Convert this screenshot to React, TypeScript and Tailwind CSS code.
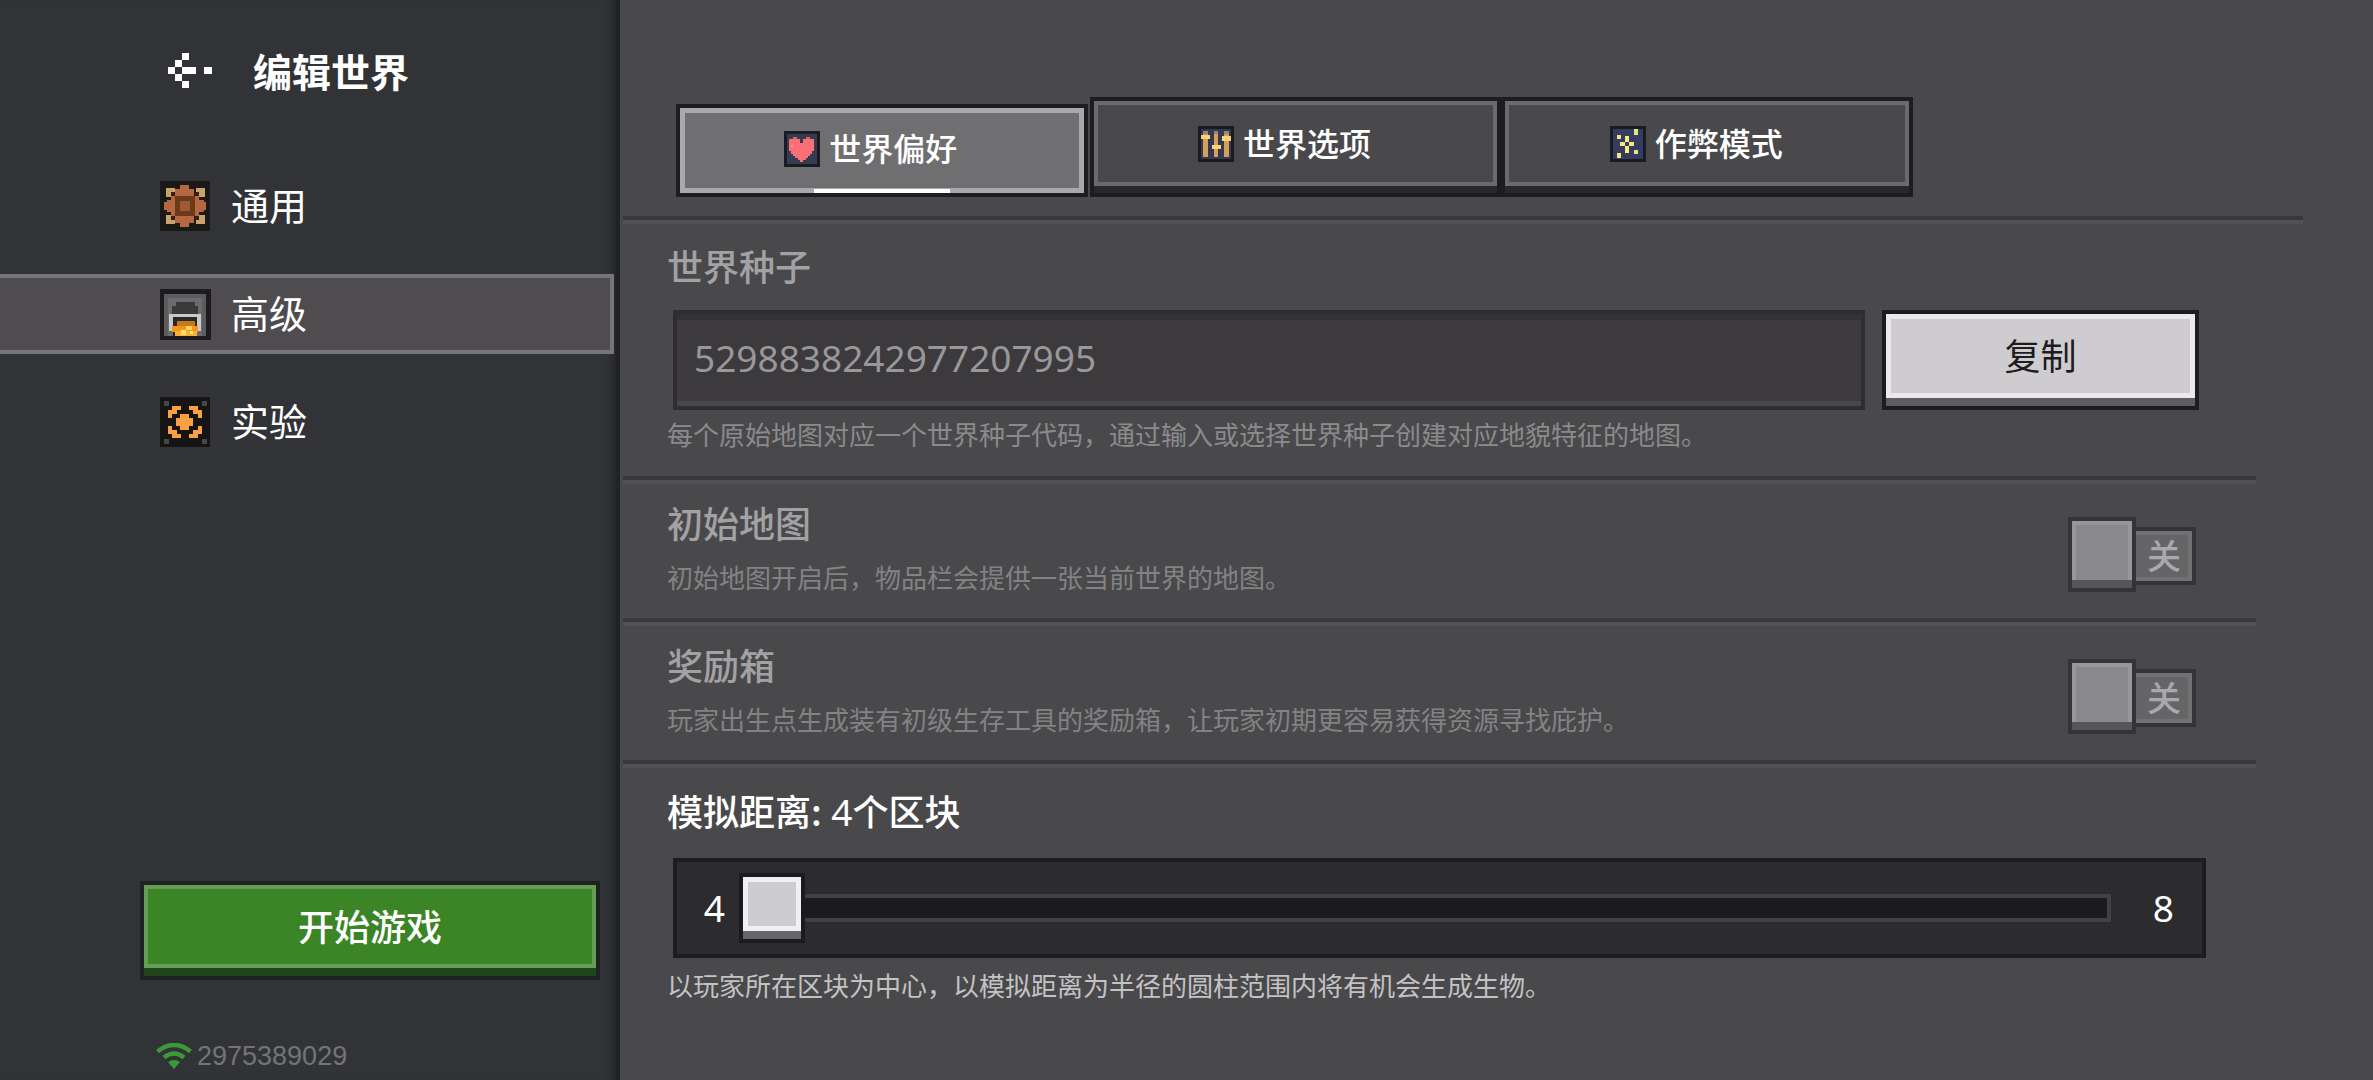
import React from 'react';

type PixelRect = [x: number, y: number, w: number, h: number, color: string];

const ARROW: PixelRect[] = [
  [0, 14, 7, 7, '#fff'],
  [7, 7, 7, 7, '#fff'],
  [7, 21, 7, 7, '#fff'],
  [14, 0, 7, 7, '#fff'],
  [14, 28, 7, 7, '#fff'],
  [14, 14, 14, 7, '#fff'],
  [36, 14, 8, 7, '#fff'],
];

const COPPER_BULB: PixelRect[] = [
  [0, 0, 50, 50, '#1b1917'],
  [6, 7, 9, 9, '#c9a26c'],
  [36, 7, 9, 9, '#c9a26c'],
  [6, 34, 9, 9, '#c9a26c'],
  [36, 34, 9, 9, '#c9a26c'],
  [20, 4, 9, 42, '#b5673f'],
  [15, 8, 19, 34, '#b5673f'],
  [11, 15, 28, 20, '#b5673f'],
  [7, 19, 37, 12, '#b5673f'],
  [4, 21, 42, 8, '#b5673f'],
  [11, 11, 4, 4, '#3a1f10'],
  [35, 11, 4, 4, '#3a1f10'],
  [11, 35, 4, 4, '#3a1f10'],
  [35, 35, 4, 4, '#3a1f10'],
  [15, 15, 20, 20, '#6b3a18'],
  [20, 20, 10, 10, '#9c5c33'],
];

const FURNACE: PixelRect[] = [
  [0, 0, 51, 51, '#1d1b1d'],
  [4, 5, 42, 42, '#5c5c5e'],
  [8, 9, 34, 38, '#6b6b6d'],
  [16, 13, 19, 5, '#3a3a3c'],
  [12, 17, 26, 8, '#3a3a3c'],
  [9, 25, 32, 3, '#c9c9ca'],
  [9, 25, 4, 17, '#c9c9ca'],
  [37, 25, 4, 17, '#c9c9ca'],
  [13, 28, 24, 19, '#2b2725'],
  [17, 32, 18, 5, '#c47a16'],
  [12, 37, 26, 6, '#f3971c'],
  [15, 42, 22, 5, '#fdb12a'],
  [21, 41, 5, 5, '#ffe07a'],
  [26, 37, 6, 4, '#ffd35c'],
  [30, 42, 3, 3, '#ffe89a'],
];

const EXPERIMENT: PixelRect[] = [
  [0, 0, 50, 50, '#171513'],
  [4, 4, 5, 5, '#464648'],
  [42, 4, 5, 5, '#464648'],
  [4, 42, 5, 5, '#464648'],
  [42, 42, 5, 5, '#464648'],
  [20, 17, 9, 16, '#f9a043'],
  [16, 21, 17, 8, '#f9a043'],
  [12, 9, 9, 4, '#f9a043'],
  [8, 13, 9, 4, '#f9a043'],
  [8, 17, 4, 4, '#f9a043'],
  [29, 9, 9, 4, '#f9a043'],
  [33, 13, 9, 4, '#f9a043'],
  [38, 17, 4, 4, '#f9a043'],
  [8, 29, 4, 4, '#f9a043'],
  [8, 33, 9, 4, '#f9a043'],
  [12, 37, 9, 4, '#f9a043'],
  [38, 29, 4, 4, '#f9a043'],
  [33, 33, 9, 4, '#f9a043'],
  [29, 37, 9, 4, '#f9a043'],
];

const HEART: PixelRect[] = [
  [0, 0, 36, 36, '#1a1c24'],
  [3, 3, 30, 30, '#363c50'],
  [9, 6, 4, 3, '#d9636c'],
  [22, 6, 4, 3, '#d9636c'],
  [5, 8, 11, 4, '#fb7078'],
  [19, 8, 11, 4, '#fb7078'],
  [5, 12, 25, 8, '#fb7078'],
  [7, 20, 21, 3, '#fb7078'],
  [9, 23, 17, 2, '#fb7078'],
  [11, 25, 13, 2, '#fb7078'],
  [14, 27, 8, 2, '#fb7078'],
  [16, 29, 3, 2, '#fb7078'],
  [7, 14, 2, 2, '#ff9090'],
];

const SLIDERS: PixelRect[] = [
  [0, 0, 36, 36, '#1a1c24'],
  [3, 3, 30, 30, '#363850'],
  [5, 5, 5, 26, '#d3a05a'],
  [16, 5, 4, 26, '#d3a05a'],
  [26, 5, 5, 26, '#d3a05a'],
  [5, 5, 5, 3, '#95866f'],
  [16, 5, 4, 3, '#95866f'],
  [26, 5, 5, 3, '#95866f'],
  [3, 9, 9, 4, '#fbd374'],
  [14, 19, 9, 4, '#fbd374'],
  [24, 10, 9, 5, '#fbd374'],
];

const SPARKS: PixelRect[] = [
  [0, 0, 36, 36, '#1a1c24'],
  [3, 3, 30, 30, '#363c60'],
  [24, 3, 4, 6, '#dbe887'],
  [7, 9, 4, 4, '#f1e77a'],
  [15, 10, 4, 6, '#f5ec7c'],
  [10, 16, 5, 4, '#f5e878'],
  [19, 16, 5, 4, '#f5e878'],
  [15, 20, 4, 7, '#f5ec7c'],
  [24, 24, 4, 4, '#dbe887'],
  [7, 27, 4, 5, '#f1e77a'],
];

const NAV_ITEMS = [
  { id: 'general', label: '通用', icon: COPPER_BULB },
  { id: 'advanced', label: '高级', icon: FURNACE },
  { id: 'experiment', label: '实验', icon: EXPERIMENT },
];

const TABS = [
  { id: 'preference', label: '世界偏好', icon: HEART },
  { id: 'options', label: '世界选项', icon: SLIDERS },
  { id: 'cheats', label: '作弊模式', icon: SPARKS },
];

function PixelIcon({ rects, width, height }: { rects: PixelRect[]; width: number; height: number }) {
  return (
    <svg
      width={width}
      height={height}
      viewBox={`0 0 ${width} ${height}`}
      shapeRendering="crispEdges"
      className="shrink-0"
      aria-hidden="true"
    >
      {rects.map(([x, y, w, h, color], i) => (
        <rect key={i} x={x} y={y} width={w} height={h} fill={color} />
      ))}
    </svg>
  );
}

function WifiIcon() {
  return (
    <svg width="36" height="26" viewBox="0 0 36 26" fill="none" stroke="#3a9a37" className="shrink-0" aria-hidden="true">
      <path d="M1.5 8.5 Q18 -4.5 34.5 8.5" strokeWidth="4.5" />
      <path d="M8 14.5 Q18 6.5 28 14.5" strokeWidth="4.5" />
      <path d="M12 19 Q18 15 24 19 L18 26 Z" fill="#3a9a37" stroke="none" />
    </svg>
  );
}

function Divider({ className = '' }: { className?: string }) {
  return <div className={`ml-[3px] h-2 border-t-4 border-[#39393b] bg-[#525254] ${className}`} />;
}

function ToggleRow({ id, title, description }: { id: string; title: string; description: string }) {
  return (
    <div className="flex items-start justify-between pt-[14px] pr-[60px] pb-[25px] pl-[47px]">
      <div>
        <h2 id={`${id}-title`} className="text-[36px] leading-[48px] font-medium text-[#a2a1a3]">{title}</h2>
        <p className="mt-[15px] text-[26px] leading-8 text-[#838284]">{description}</p>
      </div>
      <label className="mt-[19px] flex shrink-0 items-start">
        <input
          type="checkbox"
          disabled
          aria-labelledby={`${id}-title`}
          className="h-[75px] w-[68px] appearance-none border-4 border-[#343436] bg-[#89898b] shadow-[inset_0_-8px_0_#565658,inset_0_0_0_4px_#979799]"
        />
        <span className="mt-[10px] flex h-[58px] w-[60px] items-center justify-center border-y-4 border-r-4 border-[#343436] bg-[#656567] pb-[2px] text-[34px] leading-none font-medium text-[#a9a9ab] shadow-[inset_0_4px_0_#717173,inset_-4px_-4px_0_#717173]">
          关
        </span>
      </label>
    </div>
  );
}

export default function App() {
  const [activeNav, setActiveNav] = React.useState('advanced');
  const [activeTab, setActiveTab] = React.useState('preference');
  const [distance, setDistance] = React.useState(4);

  return (
    <div className="flex min-h-screen bg-[#49494b] font-['Noto_Sans_CJK_SC',sans-serif]">
      <aside className="flex w-[620px] shrink-0 flex-col border-r-4 border-[#202224] bg-[#313336] pt-[46px] pb-2 shadow-[inset_-10px_0_8px_-8px_#1f2123]">
        <div className="flex items-center gap-[41px] pl-[168px]">
          <button type="button" aria-label="返回">
            <PixelIcon rects={ARROW} width={44} height={35} />
          </button>
          <h1 className="text-[39px] leading-[48px] font-bold text-white">编辑世界</h1>
        </div>

        <nav className="mt-[72px] mr-[2px] flex flex-col gap-7">
          {NAV_ITEMS.map((item) => (
            <button
              key={item.id}
              type="button"
              onClick={() => setActiveNav(item.id)}
              className={`flex h-20 items-center gap-5 border-y-4 border-r-4 pl-40 text-[38px] leading-[48px] text-white ${
                activeNav === item.id ? 'border-[#767577] bg-[#4e4c4f]' : 'border-transparent'
              }`}
            >
              <PixelIcon rects={item.icon} width={51} height={51} />
              <span className="pb-1">{item.label}</span>
            </button>
          ))}
        </nav>

        <button
          type="button"
          className="mt-auto mr-4 ml-[140px] h-[99px] border-4 border-[#1f2221] bg-[#3b8527] pb-3 text-[36px] leading-[48px] font-medium text-white shadow-[inset_0_-8px_0_#21451a,inset_0_-12px_0_#659d56,inset_0_0_0_4px_#659d56]"
        >
          开始游戏
        </button>
        <div className="mt-[60px] flex items-center gap-[5px] pl-[156px] font-['Liberation_Sans',sans-serif] text-[27px] leading-8 text-[#737476]">
          <WifiIcon />
          2975389029
        </div>
      </aside>

      <main className="min-w-0 flex-1 pt-[97px]">
        <div role="tablist" className="ml-14 flex max-w-[1237px] items-end">
          {TABS.map((tab) => (
            <button
              key={tab.id}
              type="button"
              role="tab"
              aria-selected={activeTab === tab.id}
              onClick={() => setActiveTab(tab.id)}
              className={`relative flex flex-1 items-center justify-center gap-[9px] border-4 border-[#1d1d1f] pr-[22px] text-[32px] leading-[48px] font-medium text-white ${
                activeTab === tab.id
                  ? 'mr-[2px] h-[93px] bg-[#6f6f71] pb-1 shadow-[inset_0_0_0_5px_#a9a9ab]'
                  : 'h-[100px] bg-[#49494b] pb-[7px] shadow-[inset_0_-7px_0_#28282a,inset_0_-11px_0_#6b6b6d,inset_0_0_0_4px_#6b6b6d]'
              }`}
            >
              <PixelIcon rects={tab.icon} width={36} height={36} />
              <span className="pb-[3px]">{tab.label}</span>
              {activeTab === tab.id && (
                <span className="absolute bottom-0 left-1/2 h-1 w-[136px] -translate-x-1/2 bg-white" />
              )}
            </button>
          ))}
        </div>
        <Divider className="mt-[19px] mr-[70px]" />

        <div className="pr-[117px]">
          <section className="pt-[17px] pb-[26px] pl-[47px]">
            <h2 className="text-[36px] leading-[48px] font-medium text-[#a2a1a3]">
              <label htmlFor="world-seed">世界种子</label>
            </h2>
            <div className="mt-[21px] mr-[57px] ml-[6px] flex gap-[17px]">
              <input
                id="world-seed"
                type="text"
                readOnly
                value="5298838242977207995"
                className="h-[100px] min-w-0 flex-1 border-4 border-[#2f2d2f] bg-[#3c3a3c] px-[17px] pb-[6px] font-['Noto_Sans',sans-serif] text-[37px] text-[#98979a] shadow-[inset_0_6px_0_#343234,inset_0_-5px_0_#494749] outline-none"
              />
              <button
                type="button"
                className="h-[100px] w-[317px] border-4 border-[#1e1c1f] bg-[#cfccd0] pb-3 text-[36px] leading-[48px] text-[#1e1c1f] shadow-[inset_0_-8px_0_#5f5d60,inset_0_-13px_0_#ebe9ec,inset_0_0_0_5px_#ebe9ec]"
              >
                复制
              </button>
            </div>
            <p className="mt-2 text-[26px] leading-8 text-[#8b8a8c]">
              每个原始地图对应一个世界种子代码，通过输入或选择世界种子创建对应地貌特征的地图。
            </p>
          </section>
          <Divider />

          <ToggleRow id="starting-map" title="初始地图" description="初始地图开启后，物品栏会提供一张当前世界的地图。" />
          <Divider />

          <ToggleRow
            id="bonus-chest"
            title="奖励箱"
            description="玩家出生点生成装有初级生存工具的奖励箱，让玩家初期更容易获得资源寻找庇护。"
          />
          <Divider />

          <section className="pt-[18px] pl-[47px]">
            <h2 className="text-[36px] leading-[48px] font-medium text-white">
              <label htmlFor="sim-distance">
                模拟距离:<span className="font-['Noto_Sans',sans-serif] text-[37px] font-normal"> {distance}</span>个区块
              </label>
            </h2>
            <div className="mt-[22px] mr-[50px] ml-[6px] flex h-[100px] items-center border-4 border-[#1d1d1f] bg-[#2c2c2e] font-['Noto_Sans',sans-serif] text-[37px] leading-[48px] text-white">
              <span className="w-[62px] pr-[14px] text-right">4</span>
              <input
                id="sim-distance"
                type="range"
                min={4}
                max={8}
                value={distance}
                onChange={(e) => setDistance(Number(e.target.value))}
                className="h-[70px] min-w-0 flex-1 appearance-none bg-transparent outline-none [&::-webkit-slider-runnable-track]:h-7 [&::-webkit-slider-runnable-track]:border-4 [&::-webkit-slider-runnable-track]:border-[#414143] [&::-webkit-slider-runnable-track]:bg-[#1b1b1d] [&::-webkit-slider-thumb]:-mt-[25px] [&::-webkit-slider-thumb]:-ml-1 [&::-webkit-slider-thumb]:h-[70px] [&::-webkit-slider-thumb]:w-[66px] [&::-webkit-slider-thumb]:appearance-none [&::-webkit-slider-thumb]:border-4 [&::-webkit-slider-thumb]:border-[#1b1b1d] [&::-webkit-slider-thumb]:bg-[#cdcdcf] [&::-webkit-slider-thumb]:shadow-[inset_0_-8px_0_#676769,inset_0_-13px_0_#f0f0f2,inset_0_0_0_5px_#f0f0f2]"
              />
              <span className="w-[91px] pr-7 text-right">8</span>
            </div>
            <p className="mt-[11px] text-[26px] leading-8 text-[#c3c2c4]">
              以玩家所在区块为中心，以模拟距离为半径的圆柱范围内将有机会生成生物。
            </p>
          </section>
        </div>
      </main>
    </div>
  );
}
